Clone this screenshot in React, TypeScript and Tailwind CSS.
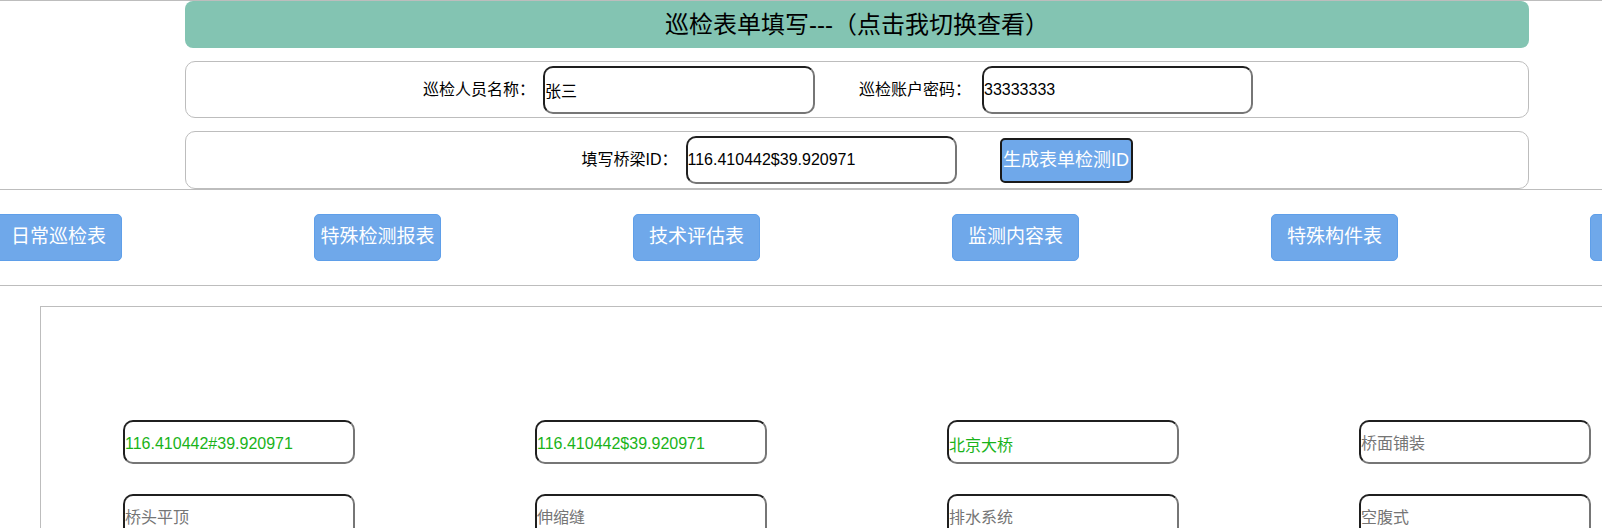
import React from 'react';

const navItems = ['日常巡检表', '特殊检测报表', '技术评估表', '监测内容表', '特殊构件表', '养护记录表'];

const gridFields: { value?: string; placeholder?: string }[] = [
  { value: '116.410442#39.920971' },
  { value: '116.410442$39.920971' },
  { value: '北京大桥' },
  { placeholder: '桥面铺装' },
  { placeholder: '桥头平顶' },
  { placeholder: '伸缩缝' },
  { placeholder: '排水系统' },
  { placeholder: '空腹式' },
];

const inputCls =
  'border-2 border-t-[#1f1f1f] border-l-[#1f1f1f] border-r-[#767676] border-b-[#767676] rounded-[10px] pl-0 text-[16px] outline-none bg-white';

export default function App() {
  return (
    <div className="w-full h-[528px] overflow-hidden bg-white border-t border-[#bdbdbd] font-['Liberation_Sans','Noto_Sans_CJK_SC',sans-serif] text-black">
      {/* Header */}
      <div className="ml-[185px] w-[1344px] h-[47px] rounded-[8px] bg-[#83c4b2] flex items-center justify-center text-[24px]">
        巡检表单填写---（点击我切换查看）
      </div>

      {/* Account row */}
      <div className="ml-[185px] w-[1344px] h-[57px] mt-[13px] rounded-[10px] border border-[#bdbdbd] flex items-center justify-center text-[16px]">
        <span>巡检人员名称：</span>
        <input className={`${inputCls} w-[272px] h-[48px] ml-[8px] mr-[44px]`} defaultValue="张三" />
        <span>巡检账户密码：</span>
        <input className={`${inputCls} w-[271px] h-[48px] ml-[11px] mr-[38px]`} defaultValue="33333333" />
      </div>

      {/* Bridge ID row */}
      <div className="ml-[185px] w-[1344px] h-[58px] mt-[13px] rounded-[10px] border border-[#bdbdbd] flex items-center justify-center text-[16px]">
        <span>填写桥梁ID：</span>
        <input className={`${inputCls} w-[271px] h-[48px] ml-[8px] mr-[43px]`} defaultValue="116.410442$39.920971" />
        <button className="w-[133px] h-[45px] p-0 rounded-[5px] border-2 border-[#1a1a1a] bg-[#6fa8ea] text-white text-[18px] whitespace-nowrap">
          生成表单检测ID
        </button>
      </div>

      {/* Form tabs */}
      <div className="h-[97px] border-t border-b border-[#bdbdbd] pt-[24px] overflow-hidden">
        <div className="flex gap-[192px] -ml-[5px]">
          {navItems.map((item) => (
            <button
              key={item}
              className="shrink-0 w-[127px] h-[47px] rounded-[5px] border border-[#5f9fe9] bg-[#6fa8ea] text-white text-[19px]"
            >
              {item}
            </button>
          ))}
        </div>
      </div>

      {/* Form body */}
      <div className="ml-[40px] mt-[20px] w-[1700px] h-[400px] border-t border-l border-[#bdbdbd] pt-[113px] pl-[82px]">
        <div className="grid grid-cols-[repeat(4,412px)] gap-y-[30px]">
          {gridFields.map((f, i) => (
            <input
              key={i}
              className={`${inputCls} w-[232px] h-[44px] pt-[3px] text-[#19b319] placeholder:text-[#757575]`}
              defaultValue={f.value}
              placeholder={f.placeholder}
            />
          ))}
        </div>
      </div>
    </div>
  );
}
